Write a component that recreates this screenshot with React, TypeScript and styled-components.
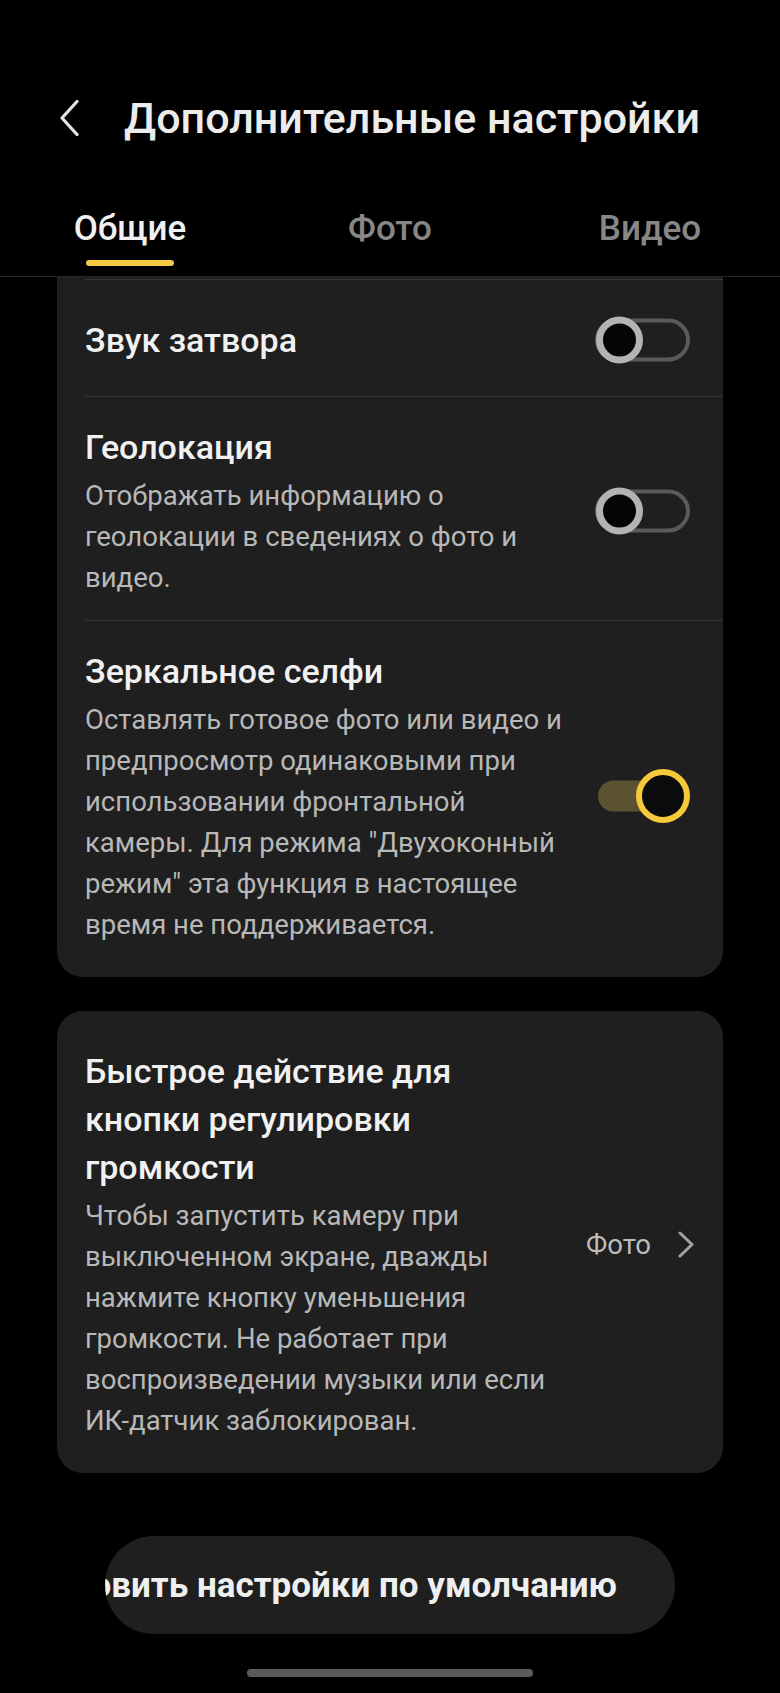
import React from 'react';
import styled, { createGlobalStyle } from 'styled-components';

const GlobalStyle = createGlobalStyle`
  html, body {
    margin: 0;
    padding: 0;
    background: #000;
  }
  body {
    font-family: Roboto, "Noto Sans", "Liberation Sans", sans-serif;
    -webkit-font-smoothing: antialiased;
  }
  * {
    box-sizing: border-box;
  }
`;

const Screen = styled.div`
  width: 780px;
  height: 1693px;
  background: #000;
  display: flex;
  flex-direction: column;
  overflow: hidden;
`;

const Header = styled.header`
  padding-top: 90px;
  padding-bottom: 10px;
  border-bottom: 1px solid #262626;
`;

const TitleBar = styled.div`
  display: flex;
  align-items: center;
  height: 56px;
  padding-left: 59px;
  gap: 45px;
`;

const BackButton = styled.button`
  display: flex;
  align-items: center;
  padding: 0;
  border: 0;
  background: none;
  color: #e4e4e4;
  cursor: pointer;
`;

const Title = styled.h1`
  margin: 0;
  font-size: 43px;
  line-height: 56px;
  font-weight: 500;
  color: #ececec;
  white-space: nowrap;
`;

const Tabs = styled.nav`
  display: grid;
  grid-template-columns: repeat(3, 1fr);
  margin-top: 63px;
`;

const Tab = styled.div<{ $active?: boolean }>`
  display: flex;
  flex-direction: column;
  align-items: center;
  font-size: 35px;
  line-height: 40px;
  font-weight: 500;
  color: ${p => (p.$active ? '#f0f0f0' : '#878787')};
`;

const TabLine = styled.span`
  display: block;
  width: 88px;
  height: 6px;
  margin-top: 11px;
  border-radius: 3px;
  background: #f3c843;
`;

const Content = styled.main`
  display: flex;
  flex-direction: column;
  padding: 0 57px;
`;

const Card = styled.section<{ $clipped?: boolean }>`
  background: #1f1f1f;
  border-radius: ${p => (p.$clipped ? '0 0 26px 26px' : '26px')};
  padding: ${p => (p.$clipped ? '2px 0 10px' : '10px 0')};
  margin-top: ${p => (p.$clipped ? '0' : '34px')};
`;

const Divider = styled.div`
  height: 1px;
  margin-left: 28px;
  background: #363636;
`;

const Row = styled.div<{ $single?: boolean; $link?: boolean }>`
  display: flex;
  align-items: center;
  min-height: ${p => (p.$single ? '116px' : 'auto')};
  padding: ${p => (p.$single ? '3px 0 0 28px' : '26px 0 22px 28px')};
  padding-right: ${p => (p.$link ? '29px' : '33px')};
`;

const TextCol = styled.div`
  flex: 1;
  min-width: 0;
  display: flex;
  flex-direction: column;
  gap: 4px;
`;

const RowTitle = styled.div`
  font-size: 34px;
  line-height: 48px;
  font-weight: 500;
  color: #f1f1f1;
`;

const RowSub = styled.div`
  font-size: 27.5px;
  line-height: 41px;
  color: #b8b8b8;
`;

const Line = styled.span`
  display: block;
  white-space: nowrap;
`;

const SwitchWrap = styled.div`
  position: relative;
  flex: none;
  width: 95px;
  height: 54px;
`;

const Track = styled.span<{ $on?: boolean }>`
  position: absolute;
  top: 50%;
  transform: translateY(-50%);
  border-radius: 999px;
  ${p =>
    p.$on
      ? `left: 3px; width: 70px; height: 31px; background: #5c5231;`
      : `left: 0; width: 95px; height: 43px; border: 4px solid #5a5a5a;`}
`;

const Knob = styled.span<{ $on?: boolean }>`
  position: absolute;
  top: 50%;
  transform: translateY(-50%);
  border-radius: 50%;
  ${p =>
    p.$on
      ? `right: 0; width: 54px; height: 54px; border: 6px solid #f4c93b; background: #0b0b0b;`
      : `left: 1px; width: 47px; height: 47px; border: 7px solid #b3b3b3; background: #050505;`}
`;

const ValueLink = styled.div`
  flex: none;
  display: flex;
  align-items: center;
  gap: 27px;
  font-size: 27.5px;
  color: #bcbcbc;
`;

const ResetButton = styled.button`
  align-self: center;
  display: flex;
  justify-content: flex-end;
  align-items: center;
  width: 570px;
  height: 98px;
  margin-top: 63px;
  padding: 0 58px 0 0;
  border: 0;
  border-radius: 49px;
  background: #1f1f1f;
  overflow: hidden;
  font-family: inherit;
  font-size: 35px;
  font-weight: 700;
  color: #efefef;
  white-space: nowrap;
`;

const HomeBar = styled.div`
  align-self: center;
  width: 286px;
  height: 8px;
  margin-top: 35px;
  border-radius: 4px;
  background: #5a5a5a;
`;

function Switch({ on }: { on?: boolean }) {
  return (
    <SwitchWrap>
      <Track $on={on} />
      <Knob $on={on} />
    </SwitchWrap>
  );
}

function Lines({ lines }: { lines: string[] }) {
  return (
    <>
      {lines.map(l => (
        <Line key={l}>{l}</Line>
      ))}
    </>
  );
}

export default function App() {
  return (
    <>
      <GlobalStyle />
      <Screen>
        <Header>
          <TitleBar>
            <BackButton aria-label="Назад">
              <svg width="20" height="36" viewBox="0 0 20 36" fill="none">
                <path
                  d="M18 1.5 L3 18 L18 34.5"
                  stroke="currentColor"
                  strokeWidth="3.2"
                  strokeLinecap="round"
                  strokeLinejoin="round"
                />
              </svg>
            </BackButton>
            <Title>Дополнительные настройки</Title>
          </TitleBar>
          <Tabs>
            <Tab $active>
              Общие
              <TabLine />
            </Tab>
            <Tab>Фото</Tab>
            <Tab>Видео</Tab>
          </Tabs>
        </Header>

        <Content>
          <Card $clipped>
            <Divider />
            <Row $single>
              <TextCol>
                <RowTitle>Звук затвора</RowTitle>
              </TextCol>
              <Switch />
            </Row>
            <Divider />
            <Row>
              <TextCol>
                <RowTitle>Геолокация</RowTitle>
                <RowSub>
                  <Lines
                    lines={[
                      'Отображать информацию о',
                      'геолокации в сведениях о фото и',
                      'видео.',
                    ]}
                  />
                </RowSub>
              </TextCol>
              <Switch />
            </Row>
            <Divider />
            <Row>
              <TextCol>
                <RowTitle>Зеркальное селфи</RowTitle>
                <RowSub>
                  <Lines
                    lines={[
                      'Оставлять готовое фото или видео и',
                      'предпросмотр одинаковыми при',
                      'использовании фронтальной',
                      'камеры. Для режима "Двухоконный',
                      'режим" эта функция в настоящее',
                      'время не поддерживается.',
                    ]}
                  />
                </RowSub>
              </TextCol>
              <Switch on />
            </Row>
          </Card>

          <Card>
            <Row $link>
              <TextCol>
                <RowTitle>
                  <Lines lines={['Быстрое действие для', 'кнопки регулировки', 'громкости']} />
                </RowTitle>
                <RowSub>
                  <Lines
                    lines={[
                      'Чтобы запустить камеру при',
                      'выключенном экране, дважды',
                      'нажмите кнопку уменьшения',
                      'громкости. Не работает при',
                      'воспроизведении музыки или если',
                      'ИК-датчик заблокирован.',
                    ]}
                  />
                </RowSub>
              </TextCol>
              <ValueLink>
                Фото
                <svg width="16" height="27" viewBox="0 0 16 27" fill="none">
                  <path
                    d="M2 2 L14 13.5 L2 25"
                    stroke="#a3a3a3"
                    strokeWidth="3"
                    strokeLinecap="round"
                    strokeLinejoin="round"
                  />
                </svg>
              </ValueLink>
            </Row>
          </Card>

          <ResetButton>Восстановить настройки по умолчанию</ResetButton>
          <HomeBar />
        </Content>
      </Screen>
    </>
  );
}
